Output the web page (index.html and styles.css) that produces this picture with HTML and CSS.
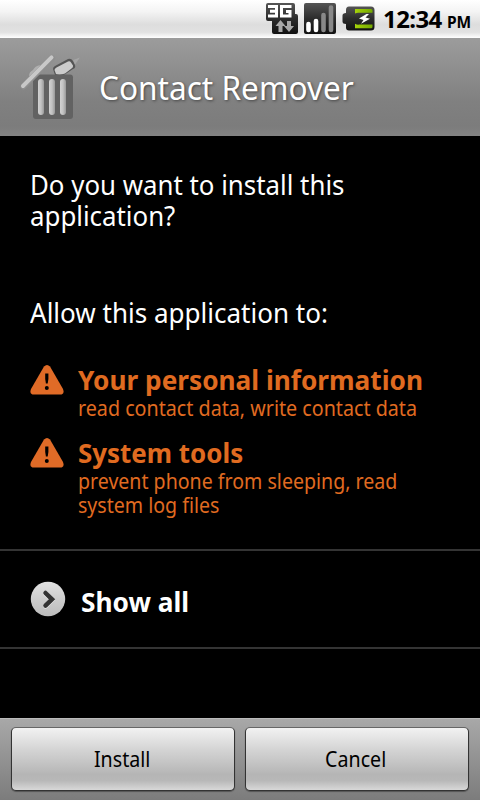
FILE: index.html
```html
<!DOCTYPE html>
<html lang="en">
<head>
<meta charset="utf-8">
<title>Contact Remover</title>
<link rel="stylesheet" href="styles.css">
</head>
<body>
<div class="status">
  <svg class="status-icons" width="120" height="38" viewBox="260 0 120 38">
    <defs>
      <linearGradient id="dark" x1="0" y1="0" x2="0" y2="1"><stop offset="0" stop-color="#555"/><stop offset=".5" stop-color="#2c2c2c"/><stop offset="1" stop-color="#111"/></linearGradient>
      <linearGradient id="lime" x1="0" y1="0" x2="1" y2="0"><stop offset="0" stop-color="#a5d20a"/><stop offset="1" stop-color="#73a800"/></linearGradient>
    </defs>
    <path d="M268 3h25q2 0 2 2v9h1q2 0 2 2v16q0 2-2 2h-22q-2 0-2-2V21h-4q-2 0-2-2V5q0-2 2-2z" fill="url(#dark)"/>
    <path d="M268 6.500h8.500v9.500h-8.500M270 11.200h6M291.500 6.500h-10v9.500h8.500v-4.500h-4" fill="none" stroke="#fff" stroke-width="3"/>
    <path d="M280.500 20l5 6h-3v6h-4v-6h-3zM287 21h4v5h3l-5 6-5-6h3z" fill="#a9a9a9"/>
    <rect x="304" y="3" width="32" height="31" rx="2" fill="url(#dark)"/>
    <g stroke-width="4.600" stroke-linecap="round"><path d="M308.500 24v6M316 21v9" stroke="#fff"/><path d="M323.500 15v15M331 7.500V30" stroke="#888"/></g>
    <path d="M349 6.500h22q3.500 0 3.500 3.500v17q0 3.500-3.500 3.500h-22q-3 0-3-3v-3.500q-3.500 0-3.500-2.500v-6q0-2.500 3.500-2.500v-3q0-3.500 3-3.500z" fill="url(#dark)"/>
    <path d="M355 9h16q1.500 0 1.500 1.500v2.300h-13.500q-1.500-.5-4 .7zM355 28.300v-4.500q2.500 1.200 4 .8h13.500v2.200q0 1.500-1.500 1.500z" fill="url(#lime)"/>
    <path d="M366.500 14l-7.500 4.500 4.500 1.500-2.500 3.800 9-5-4.500-1.300 3.500-3.500z" fill="#fff"/>
  </svg>
  <div class="clock">12:34</div><div class="pm">PM</div>
</div>
<header class="header">
  <svg class="app-icon" width="72" height="72" viewBox="14 51 72 72">
    <defs><linearGradient id="silver" x1="0" y1="0" x2="1" y2="0"><stop offset="0" stop-color="#d2d2d2"/><stop offset=".5" stop-color="#c3c3c3"/><stop offset="1" stop-color="#999"/></linearGradient></defs>
    <path d="M53 69q0-2 2-3l13-7q3-1 5 2l2 4q1 3-2 4l-9 6H55z" fill="#555"/>
    <path d="M54.500 70q0-1.500 2-2.500l11.500-6q2-.7 3 1l2 3q.5 2-1.500 3L65 73.500q-5 2-9 .5z" fill="#cbcbcb"/>
    <path d="M73 60l7-2.500-5 7z" fill="#a5a5a5"/>
    <rect x="33" y="74.500" width="40" height="44.500" rx="3" fill="#626262"/>
    <g><rect x="38" y="79" width="6" height="36" rx="3" fill="url(#silver)"/><rect x="49" y="79" width="6" height="36" rx="3" fill="url(#silver)"/><rect x="60" y="79" width="6" height="36" rx="3" fill="url(#silver)"/></g>
    <path d="M29 76q0-4 4-6 2-4 7-5l-1 4-6 6z" fill="#b0b0b0"/>
    <path d="M23.500 86.500L52 58" stroke="#8f8f8f" stroke-width="6" stroke-linecap="round"/>
    <path d="M23 86L51.500 57.400" stroke="#c8c8c8" stroke-width="4" stroke-linecap="round"/>
  </svg>
  <h1 class="title">Contact Remover</h1>
</header>
<main class="content">
  <p class="question">Do you want to install this<br>application?</p>
  <p class="allow">Allow this application to:</p>
  <section class="permission">
    <svg class="warn" width="34" height="30" viewBox="0 0 34 30"><path d="M14 1.500Q17-1.500 20 1.500L33 24q2 5.500-3 5.500H4q-5 0-3-5.500z" fill="#e06b27"/><path d="M15.200 8.500h3.200v5.500l-.7 4.500h-1.800l-.7-4.500z"/><circle cx="16.800" cy="23" r="2"/></svg>
    <div><h2 class="name name-personal">Your personal information</h2><p class="detail">read contact data, write contact data</p></div>
  </section>
  <section class="permission">
    <svg class="warn" width="34" height="30" viewBox="0 0 34 30"><path d="M14 1.500Q17-1.500 20 1.500L33 24q2 5.500-3 5.500H4q-5 0-3-5.500z" fill="#e06b27"/><path d="M15.200 8.500h3.200v5.500l-.7 4.500h-1.800l-.7-4.500z"/><circle cx="16.800" cy="23" r="2"/></svg>
    <div><h2 class="name name-system">System tools</h2><p class="detail detail-system">prevent phone from sleeping, read<br>system log files</p></div>
  </section>
</main>
<div class="show-all">
  <svg class="arrow" width="36" height="36" viewBox="0 0 36 36"><defs><linearGradient id="disc" x1="0" y1="0" x2="0" y2="1"><stop offset="0" stop-color="#e2e2e2"/><stop offset=".5" stop-color="#cdcdcd"/><stop offset="1" stop-color="#bcbcbc"/></linearGradient></defs><circle cx="18" cy="18" r="17.200" fill="url(#disc)"/><path d="M15.500 12.800l6.500 6.300-6.500 6.300" fill="none" stroke="#eee" stroke-width="4.500" stroke-linecap="round"/><path d="M15.500 12l6.500 6.300-6.500 6.300" fill="none" stroke="#333" stroke-width="4.500" stroke-linecap="round"/></svg>
  <span class="show-label">Show all</span>
</div>
<footer class="footer">
  <button class="button"><span class="label">Install</span></button>
  <button class="button"><span class="label">Cancel</span></button>
</footer>
</body>
</html>
```
FILE: styles.css
```css
* { box-sizing: border-box; }
body, h1, h2, p { margin: 0; }
body {
  width: 480px;
  height: 800px;
  overflow: hidden;
  display: flex;
  flex-direction: column;
  background: #000;
  color: #fff;
  font-family: "Noto Sans", sans-serif;
  white-space: nowrap;
}
.status {
  height: 38px;
  flex: none;
  padding-left: 260px;
  display: flex;
  align-items: baseline;
  background: linear-gradient(#fff, #f4f4f4 30%, #ddd 65%, #e2e2e2 85%, #fff);
  color: #000;
  font-weight: 700;
}
.status-icons { flex: none; align-self: flex-start; }
.clock { width: 64px; padding-left: 3px; font-size: 24px; line-height: 38px; letter-spacing: -0.6px; }
.pm { padding-left: 3px; font-size: 16px; transform: scaleX(.97); transform-origin: left; }
.header {
  height: 98px;
  flex: none;
  display: flex;
  padding: 13px 0 0 14px;
  background: linear-gradient(#9c9c9c, #808080 65%, #7c7c7c 90%, #838383);
}
.title {
  margin: 13px 0 0 12.5px;
  font-size: 33px;
  font-weight: 400;
  line-height: 48px;
  text-shadow: 1px 1px 3px #444;
  transform: scaleX(.957);
  transform-origin: left;
}
.content { height: 413px; flex: none; padding: 33px 0 0 30px; }
.question, .allow { font-size: 27px; line-height: 31px; transform-origin: left; }
.question { transform: scaleX(.957); }
.allow { margin: 66px 0 36px; transform: scaleX(.964); }
.permission { display: flex; gap: 14px; margin-bottom: 17px; color: #e06b20; }
.warn { flex: none; width: 34px; margin-top: 1px; }
.name { font-size: 27px; line-height: 31px; margin-bottom: 1px; transform-origin: left; }
.name-personal { transform: scaleX(.971); }
.name-system { transform: scaleX(.96); }
.detail { font-size: 21px; line-height: 24px; transform: scaleX(.938); transform-origin: left; }
.detail-system { transform: scaleX(.932); }
.show-all {
  height: 100px;
  flex: none;
  display: flex;
  padding: 30px 0 0 30px;
  border-top: 2px solid #343434;
  border-bottom: 2px solid #343434;
}
.show-label { margin: 5px 0 0 15px; font-size: 27px; font-weight: 700; line-height: 31px; transform: scaleX(.973); transform-origin: left; }
.footer {
  height: 82px;
  margin-top: auto;
  display: flex;
  gap: 10px;
  padding: 8px 11px 9px;
  border-top: 1px solid #bbb;
  background: linear-gradient(#a8a8a8, #7c7c7c);
}
.button {
  flex: 1;
  padding: 0;
  border: 1px solid #333;
  border-top-color: #666;
  border-radius: 5px;
  background: linear-gradient(#f2f2f2, #d4d4d4 35%, #c5c5c5 55%, #b5b5b5 75%, #b8b8b8 85%, #d8d8d8);
  box-shadow: 0 1px 1px #555;
  color: #000;
  font: 21px/24px "Noto Sans", sans-serif;
}
.label { display: inline-block; margin-right: 2px; transform: scaleX(.935); }
```
